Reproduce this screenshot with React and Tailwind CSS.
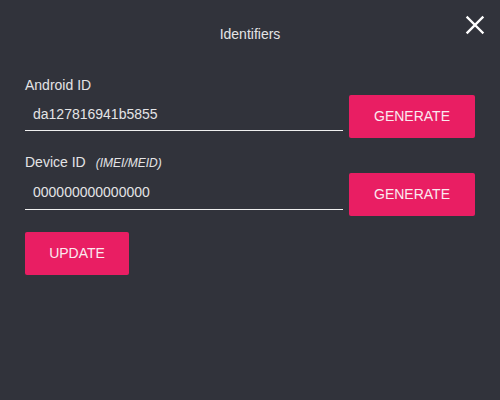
export default function App() {
  const font = { fontFamily: '"Liberation Sans", Arial, sans-serif' };
  return (
    <div className="relative w-[500px] h-[400px] bg-[#31333b] px-[25px] text-[#e4e4e6]" style={font}>
      <button className="absolute left-[464px] top-[14px] w-[22px] h-[22px] flex items-center justify-center">
        <svg width="22" height="22" viewBox="0 0 22 22">
          <path d="M3.5 3.5 L18.5 18.5 M18.5 3.5 L3.5 18.5" stroke="#ffffff" strokeWidth="2.4" strokeLinecap="square" />
        </svg>
      </button>
      <div className="pt-[24px] h-[44px] text-center text-[14px] leading-5">Identifiers</div>

      <div className="mt-[31px] text-[14px] leading-5">Android ID</div>
      <div className="flex items-start gap-[6px]">
        <div className="flex-1 h-[36px] border-b border-[#f0f0f0] pl-[8px] pt-[9px] text-[14px] leading-5">da127816941b5855</div>
        <button className="w-[126px] h-[43px] rounded-[2px] bg-[#e91e63] text-[14px] text-[#fbe9ef] flex items-center justify-center">GENERATE</button>
      </div>

      <div className="mt-[14px] text-[14px] leading-5 flex items-baseline">
        <span>Device ID</span>
        <span className="ml-[10px] text-[12px] italic">(IMEI/MEID)</span>
      </div>
      <div className="flex items-start gap-[6px]">
        <div className="flex-1 h-[37px] border-b border-[#f0f0f0] pl-[8px] pt-[9px] text-[14px] leading-5">000000000000000</div>
        <button className="w-[126px] h-[43px] rounded-[2px] bg-[#e91e63] text-[14px] text-[#fbe9ef] flex items-center justify-center">GENERATE</button>
      </div>

      <button className="mt-[16px] w-[104px] h-[43px] rounded-[2px] bg-[#e91e63] text-[14px] text-[#fbe9ef] flex items-center justify-center">UPDATE</button>
    </div>
  );
}
